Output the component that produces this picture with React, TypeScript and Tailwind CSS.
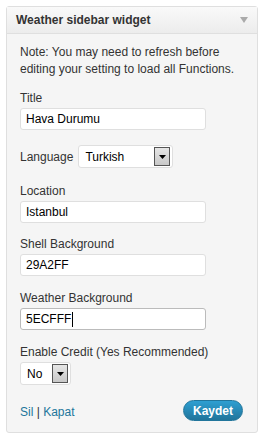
import React from 'react'

function Field({ label, value, mt, focused }: { label: string; value: string; mt: string; focused?: boolean }) {
  return (
    <div className={mt}>
      <div className="leading-[19px] text-[#333]">{label}</div>
      <div
        className={`flex h-[22px] w-[186px] items-center rounded-[3px] border bg-white px-[5px] text-black ${
          focused ? 'border-[#bbb]' : 'border-[#dfdfdf]'
        }`}
      >
        <span>{value}</span>
        {focused && <span className="ml-[1px] h-[15px] w-px bg-black" />}
      </div>
    </div>
  )
}

function Select({ value, width }: { value: string; width: string }) {
  return (
    <div className={`flex h-[23px] items-center justify-between rounded-[3px] border border-[#dfdfdf] bg-white pl-[6px] pr-[2px] ${width}`}>
      <span className="text-black">{value}</span>
      <span className="flex h-[19px] w-[16px] items-center justify-center border border-[#555] bg-gradient-to-b from-[#e6e6e6] to-[#c8c8c8]">
        <svg width="7" height="4" viewBox="0 0 7 4">
          <path d="M0 0h7L3.5 4z" fill="#000" />
        </svg>
      </span>
    </div>
  )
}

export default function App() {
  return (
    <div className="min-h-[439px] bg-white pt-[6px] font-['Liberation_Sans',Arial,sans-serif] text-[12px]">
      <div className="ml-[6px] w-[252px] rounded-[3px] border border-[#dfdfdf] bg-[#f5f5f5]">
        <div className="flex h-[27px] items-center justify-between border-b border-[#dfdfdf] bg-gradient-to-b from-[#f9f9f9] to-[#ececec] pl-[9px] pr-[9px]">
          <span className="font-bold text-[#333]">Weather sidebar widget</span>
          <svg width="8" height="6" viewBox="0 0 8 6">
            <path d="M0 0h8L4 6z" fill="#aaa" />
          </svg>
        </div>

        <div className="px-[13px] pb-[11px] pt-[10px]">
          <p className="leading-[17px] text-[#333]">
            Note: You may need to refresh before editing your setting to load all Functions.
          </p>

          <Field label="Title" value="Hava Durumu" mt="mt-[11px]" />

          <div className="mt-[15px] flex items-center gap-[5px]">
            <span className="text-[#333]">Language</span>
            <Select value="Turkish" width="w-[95px]" />
          </div>

          <Field label="Location" value="Istanbul" mt="mt-[14px]" />
          <Field label="Shell Background" value="29A2FF" mt="mt-[12px]" />
          <Field label="Weather Background" value="5ECFFF" mt="mt-[13px]" focused />

          <div className="mt-[13px]">
            <div className="leading-[19px] text-[#333]">Enable Credit (Yes Recommended)</div>
            <Select value="No" width="w-[51px]" />
          </div>

          <div className="mt-[15px] flex items-center justify-between pr-[1px]">
            <div className="mt-[3px] text-[#21759b]">
              <a href="#">Sil</a> <span className="text-[#333]">|</span> <a href="#">Kapat</a>
            </div>
            <button className="h-[21px] rounded-full border border-[#21759b] bg-gradient-to-b from-[#2e9fd2] to-[#21759b] px-[9px] text-[12px] font-bold text-white">
              Kaydet
            </button>
          </div>
        </div>
      </div>
    </div>
  )
}
